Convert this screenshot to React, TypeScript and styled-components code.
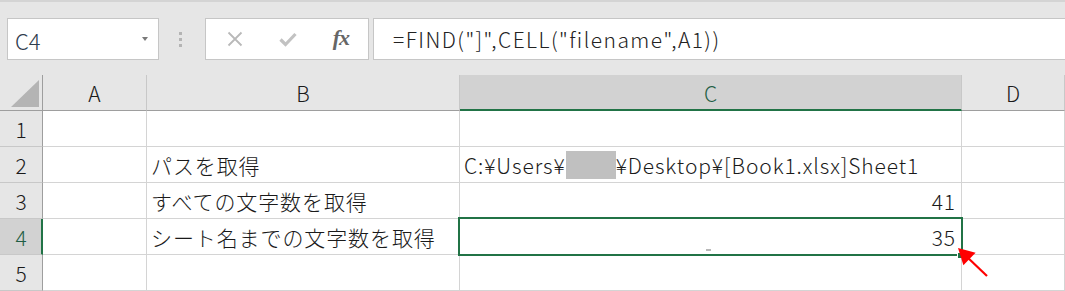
import React from "react";
import styled, { createGlobalStyle, css } from "styled-components";

const FONT = `"Noto Sans CJK JP", "Noto Sans", sans-serif`;

const GlobalStyle = createGlobalStyle`
  html, body { margin: 0; padding: 0; background: #e6e6e6; }
  body { width: 1065px; height: 291px; overflow: hidden; font-family: ${FONT}; }
  * { box-sizing: border-box; }
`;

const Page = styled.div`
  position: relative;
  width: 1065px;
  height: 291px;
  background: #e6e6e6;
  overflow: hidden;
`;

const TopStripe = styled.div`
  height: 2px;
  background: #d4d4d4;
`;

const Toolbar = styled.div`
  display: flex;
  align-items: flex-start;
  height: 73px;
  padding: 16px 0 0 7px;
`;

const Box = styled.div`
  height: 42px;
  background: #ffffff;
  border: 1px solid #c6c6c6;
  display: flex;
  align-items: center;
`;

const NameBox = styled(Box)`
  width: 152px;
  padding: 0 0 0 7px;
  justify-content: space-between;
`;

const NameText = styled.span`
  font-family: ${FONT};
  font-size: 22px;
  font-weight: 300;
  color: #2f3d4e;
  line-height: 1;
  padding-top: 2px;
`;

const DropArrow = styled.span`
  width: 0;
  height: 0;
  margin-right: 10px;
  border-left: 3.5px solid transparent;
  border-right: 3.5px solid transparent;
  border-top: 4px solid #7a7a7a;
`;

const Dots = styled.div`
  display: flex;
  flex-direction: column;
  gap: 3px;
  margin: 14px 0 0 20px;
  width: 3px;
`;

const Dot = styled.span`
  display: block;
  width: 3px;
  height: 3px;
  background: #b4b4b4;
`;

const ButtonBox = styled(Box)`
  width: 164px;
  margin-left: 23px;
  justify-content: space-between;
  padding: 0 19px 0 20px;
`;

const IconSlot = styled.span`
  width: 18px;
  height: 18px;
  display: flex;
  align-items: center;
  justify-content: center;
`;

const Fx = styled.span`
  font-family: "Liberation Serif", "DejaVu Serif", serif;
  font-style: italic;
  font-weight: bold;
  font-size: 22px;
  color: #666666;
  letter-spacing: -1px;
  line-height: 1;
  padding-bottom: 3px;
`;

const FormulaBox = styled(Box)`
  flex: 1;
  margin-left: 4px;
  border-right: none;
  padding-left: 19px;
`;

const FormulaText = styled.span`
  font-family: ${FONT};
  font-size: 21px;
  font-weight: 300;
  letter-spacing: 1.45px;
  color: #222222;
  line-height: 1;
  padding-top: 1px;
`;

const Grid = styled.div`
  display: grid;
  grid-template-columns: 43px 104px 313px 502px 103px;
  grid-auto-rows: 36px;
`;

const HeaderCell = styled.div<{ $active?: boolean }>`
  background: ${(p) => (p.$active ? "#d2d2d2" : "#e6e6e6")};
  border-right: 1px solid #c8c8c8;
  border-bottom: ${(p) => (p.$active ? "2px solid #217346" : "1px solid #9e9e9e")};
  display: flex;
  align-items: center;
  justify-content: center;
  font-family: ${FONT};
  font-size: 21px;
  font-weight: 300;
  color: ${(p) => (p.$active ? "#1e5e44" : "#1a1a1a")};
  padding-top: ${(p) => (p.$active ? "1px" : "0")};
`;

const Corner = styled.div`
  background: #e6e6e6;
  border-right: 1px solid #9e9e9e;
  border-bottom: 1px solid #9e9e9e;
  display: flex;
  align-items: flex-end;
  justify-content: flex-end;
  padding: 0 3px 3px 0;
`;

const CornerTriangle = styled.span`
  width: 0;
  height: 0;
  border-left: 28px solid transparent;
  border-bottom: 27px solid #b4b4b4;
`;

const RowHeader = styled.div<{ $active?: boolean }>`
  background: ${(p) => (p.$active ? "#d2d2d2" : "#e6e6e6")};
  border-bottom: 1px solid #c8c8c8;
  ${(p) =>
    p.$active
      ? css`
          border-right: 2px solid #217346;
          color: #1e5e44;
        `
      : css`
          border-right: 1px solid #9e9e9e;
          color: #1a1a1a;
        `}
  display: flex;
  align-items: center;
  justify-content: center;
  font-family: ${FONT};
  font-size: 21px;
  font-weight: 300;
  padding-left: ${(p) => (p.$active ? "1px" : "0")};
`;

const Cell = styled.div<{ $align?: "left" | "right" }>`
  background: #ffffff;
  border-right: 1px solid #d4d4d4;
  border-bottom: 1px solid #d4d4d4;
  display: flex;
  align-items: center;
  justify-content: ${(p) => (p.$align === "right" ? "flex-end" : "flex-start")};
  padding: 1px ${(p) => (p.$align === "right" ? "5px" : "0")} 0 4px;
  font-family: ${FONT};
  font-size: 21px;
  font-weight: 300;
  letter-spacing: 0.9px;
  color: #1a1a1a;
  white-space: nowrap;
  overflow: visible;
`;

const Redacted = styled.span`
  display: inline-block;
  width: 50px;
  height: 28px;
  background: #c0c0c0;
  vertical-align: middle;
`;

const Selection = styled.div`
  position: absolute;
  left: 458px;
  top: 217px;
  width: 505px;
  height: 39px;
  border: 2px solid #217346;
  pointer-events: none;
`;

const FillHandle = styled.div`
  position: absolute;
  left: 957px;
  top: 252px;
  width: 7px;
  height: 7px;
  background: #217346;
  border: 1px solid #ffffff;
`;

const CursorMark = styled.div`
  position: absolute;
  left: 706px;
  top: 249px;
  width: 5px;
  height: 2px;
  background: #b8b8b8;
`;

const ArrowSvg = styled.svg`
  position: absolute;
  left: 940px;
  top: 235px;
  overflow: visible;
`;

const columns = ["A", "B", "C", "D"];

type Row = { b?: string; c?: React.ReactNode; cAlign?: "left" | "right" };

const rows: Row[] = [
  {},
  {
    b: "パスを取得",
    c: (
      <>
        C:¥Users¥<Redacted />¥Desktop¥[Book1.xlsx]Sheet1
      </>
    ),
  },
  { b: "すべての文字数を取得", c: "41", cAlign: "right" },
  { b: "シート名までの文字数を取得", c: "35", cAlign: "right" },
  {},
];

export default function App() {
  return (
    <>
      <GlobalStyle />
      <Page>
        <TopStripe />
        <Toolbar>
          <NameBox>
            <NameText>C4</NameText>
            <DropArrow />
          </NameBox>
          <Dots>
            <Dot />
            <Dot />
            <Dot />
          </Dots>
          <ButtonBox>
            <IconSlot>
              <svg width="16" height="16" viewBox="0 0 16 16">
                <path d="M1.5 1.5 L14.5 14.5 M14.5 1.5 L1.5 14.5" stroke="#b9b9b9" strokeWidth="1.8" fill="none" />
              </svg>
            </IconSlot>
            <IconSlot>
              <svg width="18" height="16" viewBox="0 0 18 16">
                <path d="M1.5 8.5 L6.5 13.5 L16.5 3" stroke="#c2c2c2" strokeWidth="3.2" fill="none" strokeLinejoin="miter" />
              </svg>
            </IconSlot>
            <Fx>fx</Fx>
          </ButtonBox>
          <FormulaBox>
            <FormulaText>=FIND("]",CELL("filename",A1))</FormulaText>
          </FormulaBox>
        </Toolbar>
        <Grid>
          <Corner>
            <CornerTriangle />
          </Corner>
          {columns.map((c) => (
            <HeaderCell key={c} $active={c === "C"}>
              {c}
            </HeaderCell>
          ))}
          {rows.map((r, i) => (
            <React.Fragment key={i}>
              <RowHeader $active={i === 3}>{i + 1}</RowHeader>
              <Cell />
              <Cell>{r.b}</Cell>
              <Cell $align={r.cAlign}>{r.c}</Cell>
              <Cell />
            </React.Fragment>
          ))}
        </Grid>
        <Selection />
        <FillHandle />
        <CursorMark />
        <ArrowSvg width="60" height="50" viewBox="0 0 60 50">
          <line x1="47" y1="41" x2="26" y2="21" stroke="#ff0000" strokeWidth="2.2" />
          <polygon points="18,13 35.6,17.7 23.4,30.3" fill="#ff0000" />
        </ArrowSvg>
      </Page>
    </>
  );
}
